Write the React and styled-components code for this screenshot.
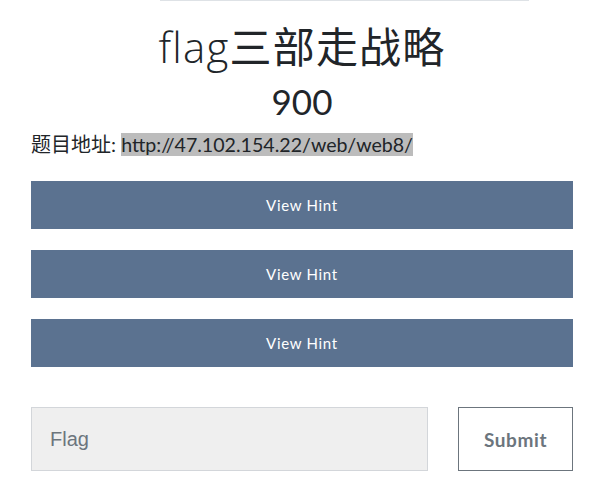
import React, { useState } from 'react';
import styled, { createGlobalStyle } from 'styled-components';

const GlobalStyle = createGlobalStyle`
  body {
    margin: 0;
    background: #fff;
    font-family: Lato, "Noto Sans CJK SC", sans-serif;
    color: #212529;
  }
`;

const Page = styled.div`
  padding: 0 30px 0 31px;
`;

const TabLine = styled.div`
  height: 1px;
  margin: 0 44px 0 129px;
  background: #dee2e6;
`;

const Title = styled.h3`
  margin: 19px 0 0;
  text-align: center;
  font-family: "Open Sans", "Noto Sans CJK SC", sans-serif;
  font-weight: 300;
  font-size: 42px;
  line-height: 50px;
  letter-spacing: 1.2px;
  color: #212529;
`;

const Cjk = styled.span`
  font-family: "Noto Sans CJK SC", sans-serif;
  font-weight: 400;
`;

const Value = styled.h4`
  margin: 8px 0 0;
  text-align: center;
  font-weight: 400;
  font-size: 35px;
  line-height: 42px;
`;

const Address = styled.p`
  margin: 10px 0 0;
  font-size: 20px;
  line-height: 24px;
  font-family: Lato, "Noto Sans CJK SC", sans-serif;
`;

const Mark = styled.span`
  background: #bcbcbc;
  font-size: 19.6px;
`;

const Hints = styled.div`
  display: flex;
  flex-direction: column;
  gap: 21px;
  margin-top: 24px;
`;

const HintButton = styled.button`
  height: 48px;
  border: none;
  background: #5b7290;
  color: #fff;
  font-family: Lato, sans-serif;
  font-size: 15px;
  letter-spacing: 0.7px;
  cursor: pointer;
`;

const SubmitRow = styled.form`
  display: flex;
  gap: 30px;
  margin-top: 40px;
`;

const FlagInput = styled.input`
  width: 397px;
  height: 64px;
  box-sizing: border-box;
  border: 1px solid #d3d6da;
  background: #efefef;
  padding: 0 18px;
  font-family: "Liberation Sans", Arial, sans-serif;
  font-size: 20px;
  color: #495057;
  &::placeholder {
    color: #6c757d;
  }
`;

const SubmitButton = styled.button`
  width: 115px;
  height: 64px;
  box-sizing: border-box;
  border: 1px solid #6c757d;
  background: #fff;
  color: #6c757d;
  font-family: Lato, sans-serif;
  font-weight: 700;
  font-size: 19px;
  letter-spacing: 0.6px;
`;

export default () => {
  const [flag, setFlag] = useState('');

  return (
    <Page>
      <GlobalStyle />
      <TabLine />
      <Title>
        flag<Cjk>三部走战略</Cjk>
      </Title>
      <Value>900</Value>
      <Address>
        题目地址: <Mark>http://47.102.154.22/web/web8/</Mark>
      </Address>
      <Hints>
        {[1, 2, 3].map((i) => (
          <HintButton key={i}>View Hint</HintButton>
        ))}
      </Hints>
      <SubmitRow onSubmit={(e) => e.preventDefault()}>
        <FlagInput
          placeholder="Flag"
          value={flag}
          onChange={({ target }) => setFlag(target.value)}
        />
        <SubmitButton type="submit">Submit</SubmitButton>
      </SubmitRow>
    </Page>
  );
};
